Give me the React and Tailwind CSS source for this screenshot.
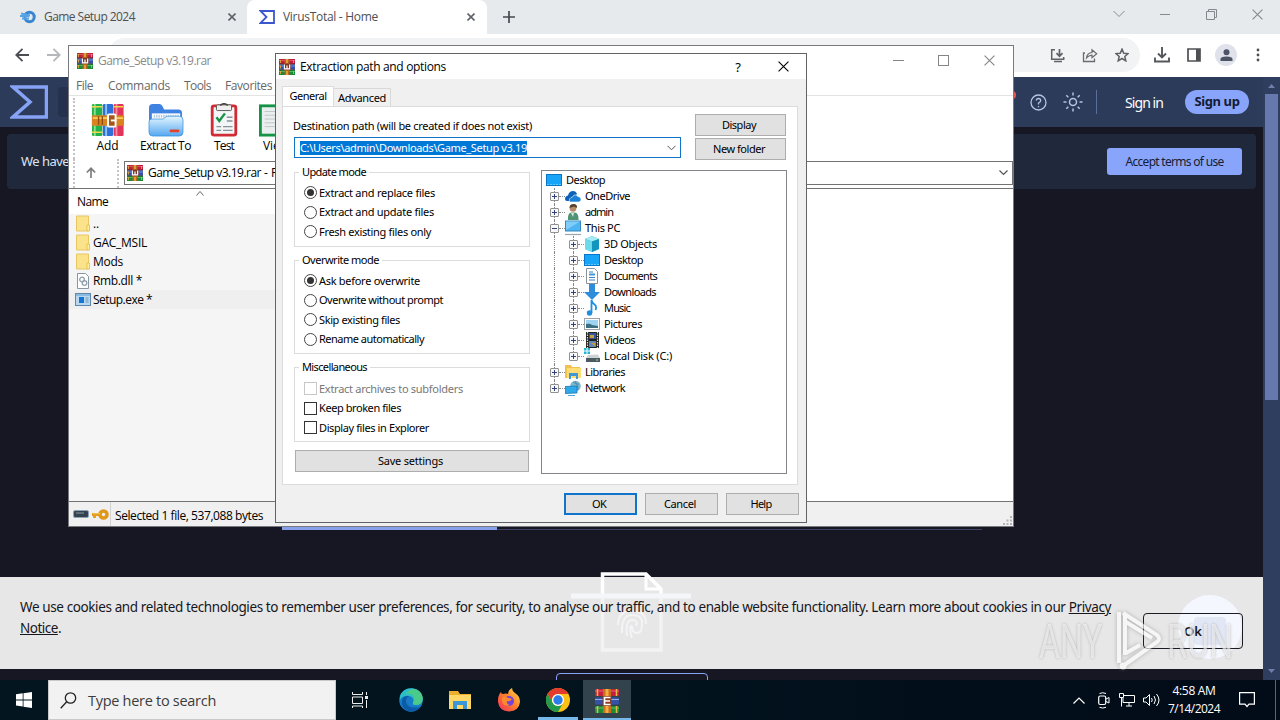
// App.jsx - Windows desktop: browser, archive manager and its extraction dialog
import React, { useLayoutEffect, useRef } from 'react';

// Single line of text, tracked so that it fills the given width
function Label({ w, className = '', children }) {
  const ref = useRef(null);

  useLayoutEffect(() => {
    const el = ref.current;
    if (!w || !el) return;
    el.style.letterSpacing = '0px';
    const natural = el.getBoundingClientRect().width;
    el.style.letterSpacing = `${(w - natural) / el.textContent.length}px`;
  }, [w]);

  return (
    <span ref={ref} className={`inline-block whitespace-nowrap ${className}`}>{children}</span>
  );
}

/* ---------- icons ---------- */

const Svg = ({ w, h, box, className = '', children }) => (
  <svg width={w} height={h} viewBox={box || `0 0 ${w} ${h}`} fill="none" className={`shrink-0 ${className}`}>
    {children}
  </svg>
);

function RarIcon({ size = 16 }) {
  return (
    <Svg w={size} h={size} box="0 0 16 16">
      <rect width="16" height="5" fill="#c01f3c" />
      <rect y="5.5" width="16" height="5" fill="#3450ad" />
      <rect y="11" width="16" height="5" fill="#1c8a38" />
      <path d="M0 1.500h16" stroke="#e2516b" />
      <path d="M0 7h16" stroke="#6f8fe0" />
      <path d="M0 12.500h16" stroke="#4dbb5c" />
      <path d="M0 5.2h16M0 10.7h16" stroke="#2b1f33" strokeWidth=".8" />
      <path d="M1.500 1v3M1.500 6.500v3M1.500 12v3M14.500 1v3M14.500 12v3" stroke="#d9a93a" strokeWidth=".9" />
      <rect x="5.6" width="4.8" height="16" fill="#b8641b" />
      <path d="M8 0v4M8 12v4" stroke="#f0b54e" strokeWidth="1.400" />
      <rect x="4.400" y="4.800" width="7.200" height="6" fill="#7c3a2d" />
      <path d="M5.400 5.500v4.300h5.200V5.500M8 6.500v3" stroke="#fff" strokeWidth="1.200" />
    </Svg>
  );
}

// Larger taskbar variant with a sideways buckle
const RarTaskIcon = () => (
  <Svg w={26} h={24}>
    <rect x="1" y="0" width="24" height="7" rx="1" fill="#c3203c" />
    <rect x="1" y="8.500" width="24" height="7" rx="1" fill="#3652a8" />
    <rect x="1" y="17" width="24" height="7" rx="1" fill="#1f8a35" />
    <path d="M1 2h24" stroke="#ee5f75" />
    <path d="M1 10.500h24" stroke="#8fb0e8" />
    <path d="M1 19h24" stroke="#5cc45e" />
    <path d="M3.500 0v7M3.500 17v7M22.500 0v7M22.500 17v7" stroke="#e3b94a" strokeWidth="1.500" />
    <rect x="9" y="0" width="8" height="24" fill="#c96f1c" />
    <path d="M13 0v7M13 17v7" stroke="#f3ad45" strokeWidth="3" />
    <rect x="8.500" y="7" width="9" height="10" fill="#8a3f22" />
    <path d="M16.500 8.500h-6v7h6M11 12h5" stroke="#fff" strokeWidth="1.700" />
  </Svg>
);

const AddIcon = () => (
  <Svg w={36} h={34} box="0 0 36 36">
    <rect x="1" y="1" width="11" height="34" rx="1.5" fill="#22b14c" />
    <rect x="12.5" y="1" width="11" height="34" rx="1.5" fill="#2f6fd8" />
    <rect x="24" y="1" width="10.5" height="34" rx="1.5" fill="#e2335a" />
    <path d="M4 1v34" stroke="#8be08a" strokeWidth="2" />
    <path d="M16 1v34" stroke="#8fc3f5" strokeWidth="2" />
    <path d="M27 1v34" stroke="#f78aa2" strokeWidth="2" />
    <path d="M1 4h11M24 4h10M1 31h11" stroke="#f2d64a" strokeWidth="1.6" />
    <rect x="1" y="13" width="34" height="11" rx="1" fill="#d9821f" />
    <path d="M2 16h32" stroke="#f8ca5c" strokeWidth="2" />
    <path d="M8 14v9M12 14v9" stroke="#8e4c10" strokeWidth="1.4" />
    <rect x="18" y="12" width="8" height="13" rx="1" stroke="#fff" strokeWidth="2" fill="#a7561a" />
    <path d="M21 18.5h6" stroke="#fff" strokeWidth="2" />
  </Svg>
);

const ExtractIcon = () => (
  <Svg w={38} h={34} box="0 0 38 36">
    <defs>
      <linearGradient id="folder" x1="0" y1="0" x2="0" y2="1">
        <stop stopColor="#e4f6ff" />
        <stop offset="1" stopColor="#55a7f0" />
      </linearGradient>
    </defs>
    <path d="M1 5q0-4 4-4h7q2 0 3 2l2 4h15q4 0 4 4v12H1z" fill="#3e83e2" />
    <path d="M4 11h30v8H4z" fill="#fff" />
    <path d="M6 14h27" stroke="#b4c9dc" strokeWidth="3" strokeDasharray="1.5 1" />
    <path d="M1 20q0-3 3-3h12l4-3h13q4 0 4 4v13q0 4-4 4H5q-4 0-4-4z" fill="url(#folder)" stroke="#3b92dc" strokeWidth=".8" />
    <rect x="23" y="28" width="10" height="3" rx=".8" fill="#e3432b" />
  </Svg>
);

const TestIcon = () => (
  <Svg w={30} h={34} box="0 0 30 36">
    <rect x="2.500" y="3" width="25" height="31" rx="2" fill="#f3f5f6" stroke="#d12c35" strokeWidth="3" />
    <rect x="7" y="2" width="16" height="6" rx="1" fill="#efefef" stroke="#555" />
    <path d="M11 2.500Q15-1 19 2.500" stroke="#444" strokeWidth="1.500" />
    <path d="m7 15 3 4 6-8" stroke="#179447" strokeWidth="2.500" />
    <path d="M18 15h6M18 19h6M7 25h5M14 25h10M7 29h5M14 29h10" stroke="#8a9299" strokeWidth="1.500" />
  </Svg>
);

const ViewIcon = () => (
  <Svg w={36} h={34} box="0 0 36 36">
    <rect x="1.500" y="3" width="33" height="31" fill="#e9eeee" stroke="#159447" strokeWidth="3" />
    <path d="M6 9h22M6 13h22M6 17h22M6 21h22M6 25h22" stroke="#bfc6c6" />
  </Svg>
);

const FolderIcon = () => (
  <Svg w={14} h={17}>
    <path d="M.5 1h12v15H.5z" fill="#fbe38c" stroke="#e8c763" />
    <path d="M11 10h2.500v6H11z" fill="#fff0a0" stroke="#e3b93f" strokeWidth=".8" />
  </Svg>
);

const DllIcon = () => (
  <Svg w={14} h={16}>
    <path d="M1.500.5h8l3 3v12h-11z" fill="#fff" stroke="#8995a0" />
    <circle cx="6" cy="6.500" r="2.300" stroke="#8fa0ad" strokeWidth="1.300" />
    <circle cx="8.500" cy="10" r="2.300" stroke="#8fa0ad" strokeWidth="1.300" />
  </Svg>
);

const ExeIcon = () => (
  <Svg w={16} h={13}>
    <rect x=".5" y=".5" width="15" height="12" fill="#b9d7ee" stroke="#5f87ac" />
    <path d="M1 2h14" stroke="#8bbbe0" strokeWidth="2" />
    <rect x="4" y="4" width="5" height="6" fill="#1574d4" />
    <path d="M10.500 5h3M10.500 7h3M10.500 9h3" stroke="#6e96ba" />
  </Svg>
);

// 16px icons of the folder tree
const treeIcons = {
  desktop: (
    <>
      <rect x=".5" y="2.500" width="15" height="11" fill="#18a5f8" stroke="#0877c9" />
      <path d="M1 12.500h14" stroke="#5cc8ff" strokeDasharray="2 1" />
    </>
  ),
  cloud: (
    <>
      <path d="M0 11q0-3 3-3.500Q4 3 8 3q3 0 4 3l-7 7H2q-2 0-2-2z" fill="#0d62b8" />
      <path d="M4.500 14q-1-4 3-5 2-4 5.500-.5 3.500.5 3 3.500-.5 2-2.500 2z" fill="#1b80d8" stroke="#fff" strokeWidth=".6" />
    </>
  ),
  user: (
    <>
      <path d="M3 16q-.5-7 3-7.500h4q4 1 3.500 7.500z" fill="#4f9474" />
      <circle cx="8" cy="4.500" r="3.300" fill="#b98a68" />
      <path d="M4.500 4q0-4 4-4t3.500 4L9 2.500z" fill="#55402f" />
      <path d="m6 9 2 4 1-4" fill="#d8e8df" />
    </>
  ),
  pc: (
    <>
      <rect x=".5" y="1" width="15" height="10" fill="#4fb4f2" stroke="#3689bd" />
      <path d="M1 1.500h14L1 10z" fill="#7fcdf8" />
      <path d="M0 14.500h16" stroke="#9aa6af" strokeWidth="1.200" />
    </>
  ),
  cube: (
    <>
      <path d="m8 0 7 3v10l-7 3-7-3V3z" fill="#28b5d6" />
      <path d="m8 0 7 3-7 2.500L1 3z" fill="#a7eaf3" />
      <path d="m8 5.500 7-2.500v10l-7 3z" fill="#1396bd" />
      <path d="M1 3l7 2.500V16l-7-3z" fill="#6ddbe8" />
    </>
  ),
  doc: (
    <>
      <path d="M2.500.5h8l3 3v12h-11z" fill="#fff" stroke="#8b9298" />
      <path d="M5 4h4M5 9.500h6M5 12h6" stroke="#3d7fc1" />
      <path d="M5 6.500h6" stroke="#3d9bd9" strokeWidth="2" />
    </>
  ),
  down: <path d="M5 0h6v8h5l-8 8-8-8h5z" fill="#2d8ddb" />,
  music: (
    <>
      <path d="M7.500 13V0q.5 3 3 4.500t1 5.500" stroke="#1c8fe0" strokeWidth="1.800" />
      <circle cx="5.500" cy="13" r="2.700" fill="#1c8fe0" />
    </>
  ),
  picture: (
    <>
      <rect x=".5" y="2.500" width="15" height="11" fill="#fff" stroke="#9aa2a8" />
      <rect x="2" y="4" width="12" height="8" fill="#9ed3f2" />
      <path d="M2 8q4-1 6 1l6 1v2H2z" fill="#3c6d80" />
    </>
  ),
  video: (
    <>
      <rect x="2" y="0" width="13" height="16" fill="#222" />
      <path d="M3.500 0v16M13.500 0v16" stroke="#ddd" strokeWidth="1.200" strokeDasharray="1.500 1" />
      <rect x="5" y="1" width="7" height="6" fill="#31569c" />
      <rect x="5" y="9" width="7" height="6" fill="#6186b8" />
      <path d="M6 3h4v3H6zM7 11h4v3" fill="#c7a13e" />
    </>
  ),
  disk: (
    <>
      <path d="M0 0h2.500v2.500H0zM3.500 0H6v2.500H3.500zM0 3.500h2.500V6H0zM3.500 3.500H6V6H3.500z" fill="#23b7d2" />
      <path d="m4 7 10-.5 2 4H2z" fill="#cdd2d5" />
      <rect x="2" y="10" width="14" height="4" fill="#4e5961" />
      <path d="M12 12h2" stroke="#7eee88" />
    </>
  ),
  library: (
    <>
      <path d="M0 1h6l1 2h8v11H0z" fill="#f2c14b" />
      <path d="M2 4h14v10H2z" fill="#ffdc74" />
      <path d="M4 15V9h9v6h-2v-3H6v3z" fill="#3c99d6" />
    </>
  ),
  network: (
    <>
      <circle cx="10.500" cy="6" r="5.300" fill="#81b8cf" />
      <path d="M8 2q3 3 6 2M10 1q4 5 3 9" stroke="#4b8ead" />
      <path d="M0 6.500 12 6v7L0 13.500z" fill="#2eaaea" stroke="#1a78b6" strokeWidth=".8" />
      <path d="M3 15.500h7" stroke="#48a8d8" />
    </>
  ),
};

/* ---------- browser ---------- */

const Close = ({ size = 8, className = '' }) => (
  <Svg w={size} h={size} box="0 0 10 10" className={className}>
    <path d="m.5.5 9 9m0-9-9 9" stroke="currentColor" />
  </Svg>
);

function TabStrip() {
  return (
    <div className="flex h-[34px] shrink-0 bg-[#e7eaed] text-[#4c5054]">
      <div className="flex w-[247px] items-center pl-5">
        <Svg w={16} h={14} className="mr-2">
          <circle cx="9.500" cy="7" r="4.700" stroke="#3786cf" strokeWidth="3" />
          <path d="M1 3.500 10 5.500M0 6h9M2 8.500h7" stroke="#55a3e3" strokeWidth="1.800" />
        </Svg>
        <Label w={91} className="text-[12px]">Game Setup 2024</Label>
        <Svg w={8} h={8} className="ml-[93px]">
          <path d="m.5.5 7 7m0-7-7 7" stroke="#5f6368" strokeWidth="1.600" />
        </Svg>
      </div>
      <div className="flex w-[240px] items-center rounded-t-lg bg-white pl-3">
        <Svg w={16} h={14} className="mr-[8px]">
          <path d="M1.500 1h13.500v12H1.500l6-6z" stroke="#3a57cf" strokeWidth="1.800" />
        </Svg>
        <Label w={95} className="text-[12px]">VirusTotal - Home</Label>
        <Svg w={8} h={8} className="ml-[89px]">
          <path d="m.5.5 7 7m0-7-7 7" stroke="#5f6368" strokeWidth="1.600" />
        </Svg>
      </div>
      <div className="flex flex-1 items-center pl-[16px]">
        <Svg w={12} h={12}>
          <path d="M6 0v12M0 6h12" stroke="#45494d" strokeWidth="1.700" />
        </Svg>
      </div>
      <div className="flex items-center pb-[6px] pr-[17px] text-[#85898d]">
        <Svg w={12} h={8}>
          <path d="m.5 1 5.500 5.500L11.500 1" stroke="currentColor" />
        </Svg>
        <Svg w={10} h={10} className="ml-[35px]">
          <path d="M0 5.500h10" stroke="currentColor" />
        </Svg>
        <Svg w={11} h={11} className="ml-[36px]">
          <path d="M.5 2.500h8v8h-8zM2.500 2.500v-2h8v8h-2" stroke="currentColor" />
        </Svg>
        <Close size={11} className="ml-[35px]" />
      </div>
    </div>
  );
}

function BrowserToolbar() {
  return (
    <div className="flex h-[43px] shrink-0 items-center bg-white pb-px pl-[15px]">
      <Svg w={14} h={14}>
        <path d="M14 7H1.500M7.500.8 1.300 7l6.200 6.200" stroke="#4a4d51" strokeWidth="1.800" />
      </Svg>
      <Svg w={14} h={14} className="ml-[18px]">
        <path d="M0 7h12.500M6.500.8 12.700 7l-6.200 6.200" stroke="#b5b8bb" strokeWidth="1.800" />
      </Svg>
      <div className="ml-[47px] flex h-[34px] w-[1032px] items-center justify-end gap-[17px] rounded-full bg-[#f1f3f4] pr-[14px]">
        <Svg w={15} h={15}>
          <path d="M5 1.700H1.700v9.600h12V9" stroke="#5f6368" strokeWidth="1.500" />
          <path d="M4 13.500h8M9.500 1v7M6.500 5.200l3 3 3-3" stroke="#5f6368" strokeWidth="1.700" />
        </Svg>
        <Svg w={16} h={15}>
          <path d="M3 5H1.500v8.500h11v-3" stroke="#686c70" strokeWidth="1.300" />
          <path d="M4.500 10Q5 5 10 4.500V1.800l4.700 4-4.700 4V7.200Q6.500 7.500 4.500 10z" stroke="#686c70" strokeWidth="1.200" />
        </Svg>
        <Svg w={14} h={14} box="0 0 24 24" className="mr-[-3px]">
          <path d="m12 2 3 7 7.500.6-5.700 5 1.700 7.400L12 18l-6.500 4 1.700-7.400-5.700-5L9 9z" stroke="#5f6368" strokeWidth="2.600" />
        </Svg>
      </div>
      <Svg w={16} h={16} className="ml-[14px]">
        <path d="M8 0v10M4 6.500l4 4 4-4M1 10.500v4h14v-4" stroke="#54585c" strokeWidth="1.900" />
      </Svg>
      <Svg w={14} h={14} className="ml-[17px]">
        <path d="M1 1h12v12H1z" stroke="#4d5054" strokeWidth="1.700" />
        <path d="M9 1h4v12H9z" fill="#4d5054" />
      </Svg>
      <div className="ml-[14px] flex size-[22px] items-center justify-center rounded-full bg-[#dfe2ea]">
        <Svg w={13} h={13}>
          <circle cx="6.500" cy="3.300" r="3" fill="#4d5466" />
          <path d="M.5 12V10q0-2.500 6-2.500t6 2.500v2z" fill="#4d5466" />
        </Svg>
      </div>
      <Svg w={4} h={14} className="ml-[19px]">
        <circle cx="2" cy="2" r="1.400" fill="#4d5054" />
        <circle cx="2" cy="7" r="1.400" fill="#4d5054" />
        <circle cx="2" cy="12" r="1.400" fill="#4d5054" />
      </Svg>
    </div>
  );
}

function SiteHeader() {
  return (
    <div className="flex h-[50px] shrink-0 items-center bg-[#2d3b5b] pl-[10px]">
      <Svg w={38} h={34}>
        <path d="M3 2h33.500v30H3l17-15z" stroke="#86a3f6" strokeWidth="3.500" />
      </Svg>
      <div className="ml-[10px] h-[30px] w-[941px] rounded bg-[#26324d]" />
      <div className="mb-[15px] ml-[9px] size-[8px] rounded-full bg-[#e5575c]" />
      <Svg w={17} h={17} className="ml-[14px]">
        <circle cx="8.500" cy="8.500" r="7.500" stroke="#b5c3e4" strokeWidth="1.300" />
        <path d="M6.300 6.500Q6.500 4.500 8.500 4.500t2.200 2Q10.700 8 8.500 9v1.500M8.500 12v1.300" stroke="#b5c3e4" strokeWidth="1.300" />
      </Svg>
      <Svg w={20} h={20} className="ml-[16px]">
        <circle cx="10" cy="10" r="3.500" stroke="#b5c3e4" strokeWidth="1.500" />
        <path d="M10 .5v3M10 16.500v3M.5 10h3M16.500 10h3M3.300 3.300l2 2M14.700 14.700l2 2M16.700 3.300l-2 2M5.300 14.700l-2 2" stroke="#b5c3e4" strokeWidth="1.500" />
      </Svg>
      <div className="ml-[13px] h-6 w-px bg-[#5c6e9b]" />
      <Label w={38} className="ml-[28px] text-[14px] text-white">Sign in</Label>
      <div className="ml-[22px] flex h-6 w-16 items-center justify-center rounded-full bg-[#88a5fb]">
        <Label w={45} className="text-[13px] font-bold text-[#141a33]">Sign up</Label>
      </div>
    </div>
  );
}

function CookieBar() {
  return (
    <div className="relative h-[92px] bg-[#e7e7e7] px-5 pt-[20px] font-['Noto_Sans'] text-[13.5px] leading-[21px] text-[#16161c]">
      {/* page content that shines through the bar */}
      <Svg w={120} h={82} className="absolute left-[571px] top-[-6px]">
        <path d="M31.500 23V3H75l15 15v5" stroke="#fff" strokeWidth="3.500" />
        <path d="M75 3v15h15" stroke="#fff" strokeWidth="3" />
        <path d="M31.500 27v52H90V27" stroke="#f3f3f5" strokeWidth="3.500" />
        <path d="M0 25h120" stroke="#f4f6fa" strokeWidth="5" />
        <path d="M47 54q0-14 14-14t14 13M51 62q-1-18 10-18t10 9q0 9-5 9t-5-7M56 65q-2-16 5-16t4 6M61 67q-3-8-1-13" stroke="#f4f4f6" strokeWidth="2" />
      </Svg>
      <div className="absolute right-[21px] top-[18px] flex size-[64px] items-center justify-center rounded-full bg-[#f5f7ff]">
        <div className="mt-2 h-7 w-8 rounded-sm bg-[#e2e7f6]" />
      </div>
      <div className="relative">
        <div><Label w={1091}>We use cookies and related technologies to remember user preferences, for security, to analyse our traffic, and to enable website functionality. Learn more about cookies in our <u>Privacy</u></Label></div>
        <div><Label w={41}><u>Notice</u>.</Label></div>
      </div>
      <div className="absolute right-[20px] top-[36px] flex h-9 w-[100px] items-center justify-center rounded border border-[#1b1b24] text-[13px] font-semibold">Ok</div>
    </div>
  );
}

function Browser() {
  return (
    <div className="flex h-[680px] flex-col">
      <TabStrip />
      <BrowserToolbar />
      <div className="flex min-h-0 flex-1">
        <div className="flex w-[1263px] flex-col overflow-hidden bg-[#161723] font-['Noto_Sans']">
          <SiteHeader />
          <div className="mx-[7px] mt-[7px] flex h-[55px] shrink-0 items-center justify-between rounded bg-[#20293b] pl-[14px] pr-[14px]">
            <Label w={48} className="text-[13px] text-[#dde3f1]">We have</Label>
            <div className="flex h-[27px] w-[135px] items-center justify-center rounded-[3px] bg-[#88a5fb]">
              <Label w={98} className="text-[12px] text-[#161c33]">Accept terms of use</Label>
            </div>
          </div>
          <div className="ml-[282px] mt-[338px] flex h-[3px] w-[700px] shrink-0 items-end">
            <div className="h-[3px] w-[215px] bg-[#87a0ea]" />
            <div className="h-px flex-1 bg-[#3c4264]" />
          </div>
          <div className="mt-[47px] shrink-0"><CookieBar /></div>
          <div className="ml-[556px] mt-[4px] h-[30px] w-[152px] shrink-0 rounded border border-[#87a5f5]" />
        </div>
        <div className="flex w-[17px] flex-col items-center justify-between bg-[#2f3d5f] py-[7px]">
          <div className="flex flex-col items-center gap-[6px]">
            <Svg w={7} h={4}><path d="M0 4h7L3.500 0z" fill="#6f7fa8" /></Svg>
            <div className="h-[306px] w-[13px] bg-[#6678ad]" />
          </div>
          <Svg w={7} h={4}><path d="M0 0h7L3.500 4z" fill="#6f7fa8" /></Svg>
        </div>
      </div>
    </div>
  );
}

/* ---------- archive manager ---------- */

const files = [
  { name: '..', w: 6, icon: <FolderIcon /> },
  { name: 'GAC_MSIL', w: 54, icon: <FolderIcon /> },
  { name: 'Mods', w: 30, icon: <FolderIcon /> },
  { name: 'Rmb.dll *', w: 49, icon: <DllIcon /> },
  { name: 'Setup.exe *', w: 59, icon: <ExeIcon />, selected: true },
];

function ArchiveWindow() {
  return (
    <div className="absolute left-[68px] top-[45px] flex h-[482px] w-[946px] flex-col border border-[#77797d] bg-white font-['Open_Sans'] text-[12px]">
      <div className="flex h-[29px] items-center pl-2 text-[#8a8a8a]">
        <RarIcon />
        <Label w={113} className="ml-[5px]">Game_Setup v3.19.rar</Label>
        <div className="flex flex-1 items-center justify-end pr-[18px] text-[#858585]">
          <div className="h-px w-[11px] bg-[#858585]" />
          <div className="ml-[34px] size-[11px] border border-[#858585]" />
          <Close size={11} className="ml-[35px]" />
        </div>
      </div>
      <div className="flex h-[21px] items-center border-b border-[#e3e3e3] pl-[7px] pt-[2px] text-[#686868]">
        <Label w={17}>File</Label>
        <Label w={62} className="ml-[15px]">Commands</Label>
        <Label w={27} className="ml-[14px]">Tools</Label>
        <Label w={47} className="ml-[14px]">Favorites</Label>
      </div>
      <div className="flex h-[63px]">
        <div className="ml-[4px] mt-[2px] border-l-2 border-dotted border-[#c4c4c4]" />
        <div className="flex w-[65px] flex-col items-center pt-[7px]"><AddIcon /><Label w={22} className="leading-[17px]">Add</Label></div>
        <div className="flex w-[51px] flex-col items-center pt-[7px]"><ExtractIcon /><Label w={51} className="leading-[17px]">Extract To</Label></div>
        <div className="ml-[2px] flex w-[62px] flex-col items-center pt-[7px]"><TestIcon /><Label w={20} className="leading-[17px]">Test</Label></div>
        <div className="ml-px flex w-[40px] flex-col items-center pt-[7px]"><ViewIcon /><Label w={26} className="leading-[17px]">View</Label></div>
      </div>
      <div className="flex h-[29px] items-center">
        <div className="ml-[4px] h-full border-l-2 border-dotted border-[#c4c4c4]" />
        <Svg w={10} h={11} className="mb-[3px] ml-[11px]">
          <path d="M5 11V1.500M.8 5.500 5 1.300l4.200 4.200" stroke="#7e7e7e" strokeWidth="1.700" />
        </Svg>
        <div className="ml-[21px] h-full border-l-2 border-dotted border-[#c4c4c4]" />
        <div className="mb-px ml-[5px] flex h-[24px] flex-1 items-center border border-[#737373] pl-[2px] pr-[4px]">
          <RarIcon />
          <span className="ml-[5px] flex-1 whitespace-nowrap text-black"><Label w={113}>Game_Setup v3.19.rar</Label> - RAR archive</span>
          <Svg w={9} h={6}><path d="m.5.5 4 4 4-4" stroke="#555" strokeWidth="1.200" /></Svg>
        </div>
      </div>
      <div className="flex h-[314px] flex-col border-y border-[#737373] text-black">
        <div className="flex h-[25px] items-center pl-2">
          <Label w={31} className="pt-px">Name</Label>
          <Svg w={8} h={5} className="mb-[17px] ml-[88px]"><path d="m.5 4.500 3.500-4 3.500 4" stroke="#666" /></Svg>
        </div>
        <div className="w-[400px] flex-1 bg-[#f5f5f5]">
          {files.map(f => (
            <div key={f.name} className={`flex h-[19px] items-center pl-[6px] ${f.selected ? 'bg-[#efefef]' : ''}`}>
              <div className="mr-[2px] flex w-4 justify-center">{f.icon}</div>
              <Label w={f.w}>{f.name}</Label>
            </div>
          ))}
        </div>
      </div>
      <div className="flex flex-1 items-center bg-[#f0f0f0] pl-[4px] text-black">
        <Svg w={16} h={8}>
          <rect x=".5" y=".5" width="15" height="7" rx="1.500" fill="#344252" stroke="#8fa5b5" />
          <path d="M3 3h8" stroke="#879b9b" />
        </Svg>
        <Svg w={17} h={11} className="ml-[3px]">
          <circle cx="11.500" cy="5.500" r="3.500" stroke="#e0971a" strokeWidth="3.600" />
          <path d="M8 5.500H0M2.500 5.500V9" stroke="#e39b19" strokeWidth="2.800" />
          <path d="M1 4.700h7" stroke="#f8cf6b" strokeWidth=".8" />
        </Svg>
        <div className="ml-px h-full w-px bg-[#d2d2d2]" />
        <Label w={148} className="ml-[4px] pt-[4px]">Selected 1 file, 537,088 bytes</Label>
        <Svg w={9} h={9} className="ml-auto mr-px mt-[13px]">
          <path d="M7 0h2v2H7zM7 3.500h2v2H7zM7 7h2v2H7zM3.500 3.500h2v2h-2zM3.500 7h2v2h-2zM0 7h2v2H0z" fill="#b5b5b5" />
        </Svg>
      </div>
    </div>
  );
}

/* ---------- extraction dialog ---------- */

const groups = [
  {
    title: 'Update mode', titleW: 64, type: 'radio', className: 'h-[75px]',
    items: [
      { text: 'Extract and replace files', w: 116, checked: true },
      { text: 'Extract and update files', w: 115 },
      { text: 'Fresh existing files only', w: 112 },
    ],
  },
  {
    title: 'Overwrite mode', titleW: 77, type: 'radio', className: 'mt-[13px] h-[94px]',
    items: [
      { text: 'Ask before overwrite', w: 101, checked: true },
      { text: 'Overwrite without prompt', w: 124 },
      { text: 'Skip existing files', w: 81 },
      { text: 'Rename automatically', w: 105 },
    ],
  },
  {
    title: 'Miscellaneous', titleW: 65, type: 'checkbox', className: 'mt-[13px] h-[75px]',
    items: [
      { text: 'Extract archives to subfolders', w: 144, disabled: true },
      { text: 'Keep broken files', w: 82 },
      { text: 'Display files in Explorer', w: 110 },
    ],
  },
];

const tree = [
  { level: 1, text: 'OneDrive', w: 45, icon: 'cloud' },
  { level: 1, text: 'admin', w: 28, icon: 'user' },
  { level: 1, text: 'This PC', w: 35, icon: 'pc', open: true },
  { level: 2, text: '3D Objects', w: 53, icon: 'cube' },
  { level: 2, text: 'Desktop', w: 39, icon: 'desktop' },
  { level: 2, text: 'Documents', w: 53, icon: 'doc' },
  { level: 2, text: 'Downloads', w: 52, icon: 'down' },
  { level: 2, text: 'Music', w: 26, icon: 'music' },
  { level: 2, text: 'Pictures', w: 38, icon: 'picture' },
  { level: 2, text: 'Videos', w: 31, icon: 'video' },
  { level: 2, text: 'Local Disk (C:)', w: 68, icon: 'disk', last: true },
  { level: 1, text: 'Libraries', w: 40, icon: 'library' },
  { level: 1, text: 'Network', w: 40, icon: 'network', last: true },
];

function TreeRow({ item }) {
  return (
    <div className="flex h-4 items-center">
      {item.level === 2 && (
        <div className="mr-[10px] flex h-full w-[9px] justify-center">
          <div className="h-full border-l border-dotted border-[#888]" />
        </div>
      )}
      <div className="flex h-full w-[9px] flex-col items-center">
        <div className="w-0 flex-1 border-l border-dotted border-[#888]" />
        <Svg w={9} h={9}>
          <rect x=".5" y=".5" width="8" height="8" rx=".5" fill="#f8f8f8" stroke="#919191" />
          <path d={item.open ? 'M2 4.500h5' : 'M2 4.500h5M4.500 2v5'} stroke="#33427d" />
        </Svg>
        <div className={`w-0 flex-1 border-l border-dotted ${item.last ? 'border-transparent' : 'border-[#888]'}`} />
      </div>
      <div className="w-[6px] border-t border-dotted border-[#888]" />
      <Svg w={16} h={16}>{treeIcons[item.icon]}</Svg>
      <Label w={item.w} className="ml-[4px]">{item.text}</Label>
    </div>
  );
}

function OptionMark({ type, checked, disabled }) {
  if (type === 'checkbox') {
    return <span className={`size-[13px] border ${disabled ? 'border-[#c8c8c8]' : 'border-[#333]'}`} />;
  }
  return (
    <span className="flex size-[13px] items-center justify-center rounded-full border border-[#444]">
      {checked && <span className="size-[7px] rounded-full bg-[#333]" />}
    </span>
  );
}

function OptionGroup({ group }) {
  return (
    <div className={`border border-[#dcdcdc] ${group.className}`}>
      <div className="-mt-[8px] ml-[4px] w-fit bg-white px-[3px] leading-[14px]"><Label w={group.titleW}>{group.title}</Label></div>
      <div className={`pl-[9px] ${group.type === 'checkbox' ? 'pt-[5px]' : 'pt-[4px]'}`}>
        {group.items.map(item => (
          <div key={item.text} className="flex h-[19.5px] items-center">
            <OptionMark type={group.type} checked={item.checked} disabled={item.disabled} />
            <Label w={item.w} className={`ml-[2px] ${item.disabled ? 'text-[#777]' : ''}`}>{item.text}</Label>
          </div>
        ))}
      </div>
    </div>
  );
}

function Button({ w, primary, className = '', children }) {
  return (
    <button className={`flex h-[22px] shrink-0 items-center justify-center bg-[#e1e1e1] pr-[3px] ${primary ? 'border-2 border-[#0f74ca]' : 'border border-[#adadad]'} ${className}`}>
      <Label w={w}>{children}</Label>
    </button>
  );
}

function ExtractDialog() {
  return (
    <div className="absolute left-[275px] top-[53px] flex h-[470px] w-[532px] flex-col border border-[#606266] bg-[#f0f0f0] font-['Noto_Sans'] text-[11px] leading-[16px] text-black">
      <div className="flex h-[25px] shrink-0 items-center bg-white pl-[3px] pr-[17px]">
        <RarIcon />
        <Label w={146} className="ml-[5px] font-['Open_Sans'] text-[12px]">Extraction path and options</Label>
        <span className="ml-auto text-[13px]">?</span>
        <Close size={11} className="ml-[37px]" />
      </div>

      <div className="flex h-[27px] shrink-0 items-end pl-[6px]">
        <div className="-mb-px flex h-[21px] w-[52px] items-center justify-center border border-b-0 border-[#dcdcdc] bg-white pb-[2px]"><Label w={37}>General</Label></div>
        <div className="flex h-[18px] w-[57px] items-center justify-center border border-l-0 border-b-0 border-[#d9d9d9]"><Label w={48}>Advanced</Label></div>
      </div>

      <div className="ml-[6px] h-[379px] w-[516px] shrink-0 border border-[#dcdcdc] bg-white pl-[11px] pt-[7px]">
        <div className="flex">
          <div className="w-[387px] shrink-0 pt-[4px]">
            <div className="-ml-px"><Label w={239}>Destination path (will be created if does not exist)</Label></div>
            <div className="mt-[3px] flex h-[21px] items-center justify-between border border-[#0f74ca] pl-[5px] pr-[4px]">
              <Label w={227} className="bg-[#0078d7] leading-[14px] text-white">C:\Users\admin\Downloads\Game_Setup v3.19</Label>
              <Svg w={9} h={6}><path d="m.5.8 4 4 4-4" stroke="#555" /></Svg>
            </div>
          </div>
          <div className="ml-[14px] flex w-[91px] shrink-0 flex-col gap-[2px]">
            <Button w={34}>Display</Button>
            <Button w={52}>New folder</Button>
          </div>
        </div>

        <div className="mt-[10px] flex">
          <div className="mt-[2px] w-[236px] shrink-0">
            {groups.map(g => <OptionGroup key={g.title} group={g} />)}
            <Button w={65} className="ml-px mt-[8px] w-[234px]">Save settings</Button>
          </div>
          <div className="ml-[11px] h-[304px] w-[246px] shrink-0 border border-[#82858a] pl-[4px] pt-px">
            <div className="flex h-4 items-center">
              <Svg w={16} h={16}>{treeIcons.desktop}</Svg>
              <Label w={39} className="ml-[4px]">Desktop</Label>
            </div>
            <div className="pl-[4px]">
              {tree.map((item, i) => <TreeRow key={i} item={item} />)}
            </div>
          </div>
        </div>
      </div>

      <div className="mt-[8px] flex justify-end gap-[8px] pr-[7px]">
        <Button w={14} primary className="w-[73px]">OK</Button>
        <Button w={32} className="w-[73px]">Cancel</Button>
        <Button w={21} className="w-[73px]">Help</Button>
      </div>
    </div>
  );
}

/* ---------- taskbar ---------- */

function Taskbar() {
  return (
    <div className="flex h-10 items-center bg-linear-to-r from-[#03151f] via-[#02131e] to-[#020b18] font-['Open_Sans'] text-white">
      <div className="flex h-full w-12 items-center justify-center">
        <Svg w={16} h={16}>
          <path d="m0 2.300 6.700-1v6.200H0zM7.500 1.200 16 0v7.500H7.500zM0 8.400h6.700v6.200l-6.700-1zM7.500 8.400H16V16l-8.500-1.300z" fill="#fff" />
        </Svg>
      </div>
      <div className="flex h-full w-[288px] items-center border border-[#c9c9c9] bg-[#f2f2f2] pl-[11px] text-[#3c3c3c]">
        <Svg w={17} h={17}>
          <circle cx="10.500" cy="6" r="5.200" stroke="#222" strokeWidth="1.300" />
          <path d="m6.700 9.700-6 6.500" stroke="#222" strokeWidth="1.300" />
        </Svg>
        <Label w={128} className="ml-[11px] pt-px text-[14.5px]">Type here to search</Label>
      </div>
      <div className="flex w-12 items-center justify-center">
        <Svg w={17} h={16}>
          <path d="M.5 0v2.500h10V0M.5 5h10v6.500H.5zM.5 16v-2h10v2M14.500 0v3M14.500 8v8" stroke="#eee" />
          <path d="M13 4h3v3h-3z" fill="#eee" />
        </Svg>
      </div>

      {/* Edge */}
      <div className="ml-[3px] flex w-[48px] justify-center">
        <Svg w={24} h={24}>
          <circle cx="12" cy="12" r="11.800" fill="#177bc7" />
          <path d="M1 8Q4 0 13 .3q10 1 10.800 10Q24 17 17 17q-4 0-3-2.500Q16 9 10 8 4 7 1 12z" fill="#2dbfc4" />
          <path d="M16 1q8 3 7.800 10Q23 17 17 17q-4 0-3-2.500 2-1 1-5.500Q13 5 7 6q3-5 9-5z" fill="#55cf75" opacity=".75" />
          <path d="M10 8q-5 3-2 8.500Q11 21 21 19q-4 5-10 4.800Q2 21 3 13q1-5 7-5z" fill="#0d5ba7" />
        </Svg>
      </div>
      {/* Explorer */}
      <div className="flex w-[49px] justify-center">
        <Svg w={22} h={20}>
          <path d="M0 1h9l2 3h11v15H0z" fill="#edae2e" />
          <path d="M0 5h22v14H0z" fill="#ffd766" />
          <path d="M4 19v-8h14v8h-4v-4H8v4z" fill="#3a96d4" />
        </Svg>
      </div>
      {/* Firefox */}
      <div className="flex w-[49px] justify-center">
        <Svg w={24} h={24}>
          <defs>
            <linearGradient id="fox" x1="1" y1="0" x2="0" y2="1">
              <stop stopColor="#ffe14a" />
              <stop offset=".5" stopColor="#ff7b2c" />
              <stop offset="1" stopColor="#f02c64" />
            </linearGradient>
          </defs>
          <path d="M4 4q0 2 2 2 3-1 5 0 0-4 4-6 0 3 3 5 5 3 5 9-1 9-11 9.500Q2 23 1 14 .5 8 4 4z" fill="url(#fox)" />
          <circle cx="12" cy="13" r="5" fill="#7443d8" />
          <path d="M5 9q4-1 6 1 2 0 4 1-2 3-5 2-1 3 3 4-7 2-8-4z" fill="#ff8a2d" />
        </Svg>
      </div>
      {/* Chrome */}
      <div className="flex h-full w-[50px] flex-col items-center">
        <div className="flex flex-1 items-center pt-[3px]">
          <Svg w={24} h={24}>
            <circle cx="12" cy="12" r="12" fill="#fbc116" />
            <path d="M1.600 6A12 12 0 0 1 22.400 6H12a6 6 0 0 0-5.200 9z" fill="#e33b2e" />
            <path d="M1.600 6A12 12 0 0 0 12 24l5.200-9A6 6 0 0 1 6.800 15z" fill="#229a4b" />
            <circle cx="12" cy="12" r="6" fill="#fff" />
            <circle cx="12" cy="12" r="4.700" fill="#2b7de9" />
          </Svg>
        </div>
        <div className="h-[3px] w-[40px] bg-[#76b9ed]" />
      </div>
      <div className="flex h-full w-12 flex-col items-center bg-[#33434e]">
        <div className="flex flex-1 items-center pt-[3px]"><RarTaskIcon /></div>
        <div className="h-[2px] w-full bg-[#76b9ed]" />
      </div>

      <div className="ml-auto flex items-center">
        <Svg w={12} h={7}><path d="m.5 6.500 5.500-5.500 5.500 5.500" stroke="#fff" strokeWidth="1.200" /></Svg>
        <Svg w={12} h={17} className="ml-[13px]">
          <rect x=".7" y="4" width="7" height="8.500" rx="1.500" stroke="#fff" strokeWidth="1.200" />
          <path d="m8 7 3-1.500V11L8 9.500M1.500 1.500q3-1.500 6.500 0M1.500 15.300q3 1.500 6.500 0" stroke="#fff" />
        </Svg>
        <Svg w={16} h={14} className="ml-[9px]">
          <path d="M5 2.500h10.500v7H4M4 9.500V5M7 13h6M10 10v3M.5.5h4v4h-4zM2.500 4.500v9" stroke="#fff" />
        </Svg>
        <Svg w={17} h={14} className="ml-[8px]">
          <path d="M.5 5H3l3.500-3.500v11L3 9H.5zM8.500 5q1.500 2 0 4M11 3q3 4 0 8M13.500 1q5 6 0 12" stroke="#fff" />
        </Svg>
        <div className="ml-[7px] flex w-[54px] flex-col items-center text-[12px] leading-[18px]">
          <Label w={43}>4:58 AM</Label>
          <Label w={52}>7/14/2024</Label>
        </div>
        <Svg w={16} h={16} className="ml-[18px]">
          <path d="M.6.6h14.800v11.600H10L8 14.500l-2-2.300H.6z" stroke="#fff" strokeWidth="1.200" />
        </Svg>
        <div className="ml-[20px] mr-[4px] h-10 w-px bg-[#5d6570]" />
      </div>
    </div>
  );
}

function Watermark() {
  return (
    <div className="absolute left-[1039px] top-[608px] flex h-[64px] w-[200px] items-center text-[49px] leading-none text-white/60 [text-shadow:0_0_3px_rgba(110,110,110,0.45)]">
      <span className="w-[64px] origin-left scale-x-[.66] pt-[2px] font-['Roboto']">ANY</span>
      <Svg w={54} h={64} className="ml-[6px] opacity-65 drop-shadow-[0_0_2px_rgba(110,110,110,0.7)]">
        <path d="M10 4v51M16 5v42M14 5l34 22q4 4 0 7L14 58M17 14l26 16M17 45l14-8" stroke="#fff" strokeWidth="4" />
        <circle cx="14" cy="58" r="3.500" fill="#fff" />
      </Svg>
      <span className="ml-[4px] w-[64px] origin-left scale-x-[.68] pt-[2px] font-['Roboto']">RUN</span>
    </div>
  );
}

export default function App() {
  return (
    <div className="relative h-[720px] w-[1280px] overflow-hidden font-['Open_Sans',sans-serif]">
      <Browser />
      <Taskbar />
      <ArchiveWindow />
      <ExtractDialog />
      <Watermark />
    </div>
  );
}
